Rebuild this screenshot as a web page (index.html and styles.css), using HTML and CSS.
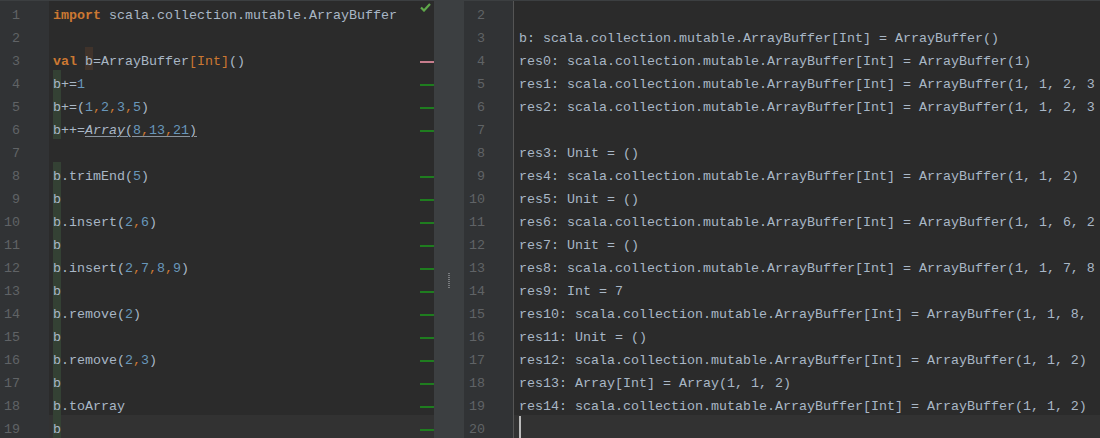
FILE: index.html
```html
<!DOCTYPE html>
<html lang="en">
<head>
  <meta charset="UTF-8">
  <title>ArrayBuffer worksheet</title>
  <link rel="stylesheet" href="styles.css">
</head>
<body>
  <div class="ide">
    <!-- left: worksheet source -->
    <div class="editor left">
      <div class="gutter">
        <div class="num">1</div><div class="num">2</div><div class="num">3</div><div class="num">4</div>
        <div class="num">5</div><div class="num">6</div><div class="num">7</div><div class="num">8</div>
        <div class="num">9</div><div class="num">10</div><div class="num">11</div><div class="num">12</div>
        <div class="num">13</div><div class="num">14</div><div class="num">15</div><div class="num">16</div>
        <div class="num">17</div><div class="num">18</div><div class="num">19</div>
      </div>
      <div class="code">
        <div class="ln"><span class="t"><b class="kw">import</b> scala.collection.mutable.ArrayBuffer</span>
          <svg class="ok" width="11" height="9" viewBox="0 0 11 9"><path d="M1 4.5 L4 7.5 L10 1" fill="none" stroke="#5fa84a" stroke-width="2.2"/></svg>
        </div>
        <div class="ln"></div>
        <div class="ln"><span class="t"><b class="kw">val</b> </span><span class="t wr">b</span><span class="t">=ArrayBuffer<span class="ty">[Int]</span>()</span><i class="mark pink"></i></div>
        <div class="ln"><span class="t rd">b</span><span class="t">+=<span class="n">1</span></span><i class="mark"></i></div>
        <div class="ln"><span class="t rd">b</span><span class="t">+=(<span class="n">1</span><span class="c">,</span><span class="n">2</span><span class="c">,</span><span class="n">3</span><span class="c">,</span><span class="n">5</span>)</span><i class="mark"></i></div>
        <div class="ln"><span class="t rd">b</span><span class="t">++=<u><em>Array</em>(<span class="n">8</span><span class="c">,</span><span class="n">13</span><span class="c">,</span><span class="n">21</span>)</u></span><i class="mark"></i></div>
        <div class="ln"></div>
        <div class="ln"><span class="t rd">b</span><span class="t">.trimEnd(<span class="n">5</span>)</span><i class="mark"></i></div>
        <div class="ln"><span class="t rd">b</span><i class="mark"></i></div>
        <div class="ln"><span class="t rd">b</span><span class="t">.insert(<span class="n">2</span><span class="c">,</span><span class="n">6</span>)</span><i class="mark"></i></div>
        <div class="ln"><span class="t rd">b</span><i class="mark"></i></div>
        <div class="ln"><span class="t rd">b</span><span class="t">.insert(<span class="n">2</span><span class="c">,</span><span class="n">7</span><span class="c">,</span><span class="n">8</span><span class="c">,</span><span class="n">9</span>)</span><i class="mark"></i></div>
        <div class="ln"><span class="t rd">b</span><i class="mark"></i></div>
        <div class="ln"><span class="t rd">b</span><span class="t">.remove(<span class="n">2</span>)</span><i class="mark"></i></div>
        <div class="ln"><span class="t rd">b</span><i class="mark"></i></div>
        <div class="ln"><span class="t rd">b</span><span class="t">.remove(<span class="n">2</span><span class="c">,</span><span class="n">3</span>)</span><i class="mark"></i></div>
        <div class="ln"><span class="t rd">b</span><i class="mark"></i></div>
        <div class="ln"><span class="t rd">b</span><span class="t">.toArray</span><i class="mark"></i></div>
        <div class="ln current"><span class="t rd">b</span><i class="mark"></i></div>
      </div>
    </div>

    <div class="splitter"><span class="grip"></span></div>

    <!-- right: evaluation output -->
    <div class="editor right">
      <div class="gutter">
        <div class="num">2</div><div class="num">3</div><div class="num">4</div><div class="num">5</div>
        <div class="num">6</div><div class="num">7</div><div class="num">8</div><div class="num">9</div>
        <div class="num">10</div><div class="num">11</div><div class="num">12</div><div class="num">13</div>
        <div class="num">14</div><div class="num">15</div><div class="num">16</div><div class="num">17</div>
        <div class="num">18</div><div class="num">19</div><div class="num">20</div>
      </div>
      <div class="code">
        <div class="ln"></div>
        <div class="ln"><span class="t">b: scala.collection.mutable.ArrayBuffer[Int] = ArrayBuffer()</span></div>
        <div class="ln"><span class="t">res0: scala.collection.mutable.ArrayBuffer[Int] = ArrayBuffer(1)</span></div>
        <div class="ln"><span class="t">res1: scala.collection.mutable.ArrayBuffer[Int] = ArrayBuffer(1, 1, 2, 3</span></div>
        <div class="ln"><span class="t">res2: scala.collection.mutable.ArrayBuffer[Int] = ArrayBuffer(1, 1, 2, 3</span></div>
        <div class="ln"></div>
        <div class="ln"><span class="t">res3: Unit = ()</span></div>
        <div class="ln"><span class="t">res4: scala.collection.mutable.ArrayBuffer[Int] = ArrayBuffer(1, 1, 2)</span></div>
        <div class="ln"><span class="t">res5: Unit = ()</span></div>
        <div class="ln"><span class="t">res6: scala.collection.mutable.ArrayBuffer[Int] = ArrayBuffer(1, 1, 6, 2</span></div>
        <div class="ln"><span class="t">res7: Unit = ()</span></div>
        <div class="ln"><span class="t">res8: scala.collection.mutable.ArrayBuffer[Int] = ArrayBuffer(1, 1, 7, 8</span></div>
        <div class="ln"><span class="t">res9: Int = 7</span></div>
        <div class="ln"><span class="t">res10: scala.collection.mutable.ArrayBuffer[Int] = ArrayBuffer(1, 1, 8,</span></div>
        <div class="ln"><span class="t">res11: Unit = ()</span></div>
        <div class="ln"><span class="t">res12: scala.collection.mutable.ArrayBuffer[Int] = ArrayBuffer(1, 1, 2)</span></div>
        <div class="ln"><span class="t">res13: Array[Int] = Array(1, 1, 2)</span></div>
        <div class="ln"><span class="t">res14: scala.collection.mutable.ArrayBuffer[Int] = ArrayBuffer(1, 1, 2)</span></div>
        <div class="ln current"><span class="caret"></span></div>
      </div>
    </div>
  </div>
</body>
</html>
```

FILE: styles.css
```css
body {
  margin: 0;
  height: 438px;
  overflow: hidden;
  background-color: #2b2b2b;
  font-family: "Liberation Mono", "DejaVu Sans Mono", monospace;
  font-size: 13.33px;
  color: #a9b7c6;
}

.ide {
  display: flex;
  height: 438px;
  border-top: 1px solid #3c3f41;
  box-sizing: border-box;
}

.editor {
  display: flex;
  overflow: hidden;
}

.editor.left {
  width: 434px;
}

.editor.right {
  flex: 1;
}

.gutter {
  width: 49px;
  flex-shrink: 0;
  box-sizing: border-box;
  padding-right: 29px;
  background-color: #313335;
  color: #606366;
  text-align: right;
}

.right .gutter {
  width: 50px;
  padding-right: 28px;
  border-right: 1px solid #555555;
}

.num {
  height: 23px;
  padding-top: 6px;
  line-height: 17px;
  box-sizing: border-box;
}

.code {
  flex: 1;
  min-width: 0;
  padding-left: 4px;
}

.right .code {
  padding-left: 5px;
}

.ln {
  display: flex;
  height: 23px;
  white-space: pre;
}

.ln.current {
  background-color: #323232;
  margin-left: -4px;
  padding-left: 4px;
}

.right .ln.current {
  margin-left: -5px;
  padding-left: 5px;
}

.t {
  padding-top: 6px;
  line-height: 17px;
}

.kw {
  color: #cc7832;
  font-weight: bold;
}

.ty,
.c {
  color: #cc7832;
}

.n {
  color: #6897bb;
}

u {
  text-decoration-color: #8a949e;
  text-underline-offset: 2px;
}

em {
  font-style: italic;
}

.rd {
  background-color: #344134;
}

.wr {
  background-color: #40332b;
}

.mark {
  margin-left: auto;
  margin-top: 14px;
  width: 14px;
  height: 2px;
  background-color: #1f7d1f;
  flex-shrink: 0;
}

.mark.pink {
  background-color: #c77d8d;
}

.ok {
  margin-left: auto;
  margin-right: 3px;
  margin-top: 2px;
}

.splitter {
  width: 30px;
  flex-shrink: 0;
  background-color: #3c3f41;
  display: flex;
  justify-content: center;
  padding-top: 272px;
  box-sizing: border-box;
}

.grip {
  width: 2px;
  height: 15px;
  background-image: repeating-linear-gradient(to bottom, #7a7d80 0 1px, transparent 1px 2px);
}

.caret {
  width: 2px;
  margin-top: 1px;
  background-color: #bbbbbb;
}
```
